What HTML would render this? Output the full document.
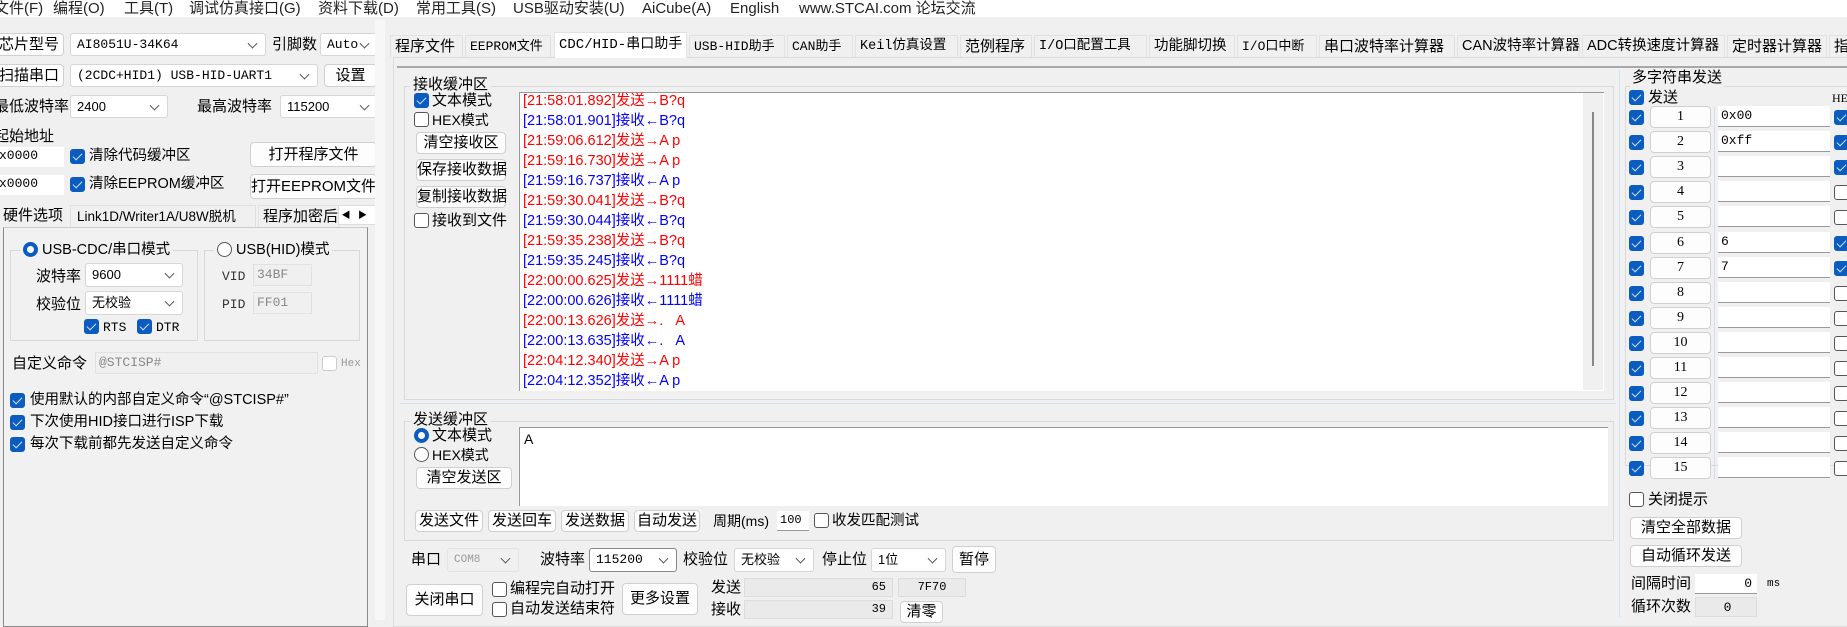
<!DOCTYPE html>
<html><head><meta charset="utf-8"><style>
*{box-sizing:border-box;margin:0;padding:0}
body{width:1847px;height:617px;overflow:hidden;background:#f0f0f0;position:relative;font-family:"Liberation Sans","Noto Sans CJK SC",sans-serif;font-size:14px;color:#000}
.a{position:absolute;white-space:nowrap}
.t{position:absolute;white-space:nowrap;line-height:1}
.btn{position:absolute;background:#fdfdfd;border:1px solid #d0d0d0;border-radius:4px;text-align:center;white-space:nowrap;font-size:14px}
.cmb{position:absolute;background:#fff;border:1px solid #d6d6d6;border-radius:3px;padding-left:6px;white-space:nowrap;font-size:13px;font-family:"Liberation Mono","Noto Sans CJK SC",monospace}
.cmb:after{content:"";position:absolute;right:9px;top:50%;width:6px;height:6px;border-right:1px solid #555;border-bottom:1px solid #555;transform:translateY(-70%) rotate(45deg)}
.inp{position:absolute;background:#fff;border:1px solid #d6d6d6;white-space:nowrap;font-size:13px;font-family:"Liberation Mono",monospace;padding-left:3px}
.cb{position:absolute;width:15px;height:15px;border:1px solid #555;border-radius:3px;background:#fff}
.cb.on{background:#0b5cc0;border-color:#0b5cc0}
.cb.on:after{content:"";position:absolute;left:4px;top:1px;width:4px;height:8px;border-right:1.5px solid #cfe0f5;border-bottom:1.5px solid #cfe0f5;transform:rotate(45deg)}
.rd{position:absolute;width:15px;height:15px;border:1px solid #555;border-radius:50%;background:#fff}
.rd.on{border:4px solid #0b5cc0}
.grp{position:absolute;border:1px solid #d8d8d8}
.tab{position:absolute;top:35px;height:22px;border:1px solid #e2e2e2;border-bottom:none;background:#f0f0f0;font-size:14px;line-height:21px;padding:0 4px;white-space:nowrap;overflow:hidden}
.log{position:absolute;left:523px;font-size:14.5px;line-height:20px;font-family:"Liberation Sans","Noto Sans CJK SC",sans-serif}
.r{color:#f00}.b{color:#00f}
</style></head><body>
<div class="a" style="left:0;top:0;width:1847px;height:17px;background:#fff"></div>
<div class="t" style="left:0;top:1px;font-size:15px;color:#222">
<span style="position:absolute;left:-6px">文件(F)</span><span style="position:absolute;left:53px">编程(O)</span><span style="position:absolute;left:124px">工具(T)</span><span style="position:absolute;left:189px">调试仿真接口(G)</span><span style="position:absolute;left:318px">资料下载(D)</span><span style="position:absolute;left:416px">常用工具(S)</span><span style="position:absolute;left:513px">USB驱动安装(U)</span><span style="position:absolute;left:642px">AiCube(A)</span><span style="position:absolute;left:730px">English</span><span style="position:absolute;left:799px">www.STCAI.com 论坛交流</span></div>

<div class="btn" style="left:-6px;top:33px;width:70px;height:23px;line-height:21px;font-size:15px">芯片型号</div>
<div class="cmb" style="left:70px;top:33px;width:196px;height:23px;line-height:21px">AI8051U-34K64</div>
<div class="t" style="left:272px;top:37px;font-size:15px">引脚数</div>
<div class="cmb" style="left:320px;top:33px;width:58px;height:23px;line-height:21px">Auto</div>
<div class="btn" style="left:-6px;top:64px;width:70px;height:23px;line-height:21px;font-size:15px">扫描串口</div>
<div class="cmb" style="left:70px;top:64px;width:248px;height:23px;line-height:21px">(2CDC+HID1) USB-HID-UART1</div>
<div class="btn" style="left:324px;top:64px;width:53px;height:23px;line-height:21px;font-size:15px">设置</div>
<div class="t" style="left:-6px;top:99px;font-size:15px">最低波特率</div>
<div class="cmb" style="left:70px;top:95px;width:98px;height:23px;line-height:21px;font-family:'Liberation Sans'">2400</div>
<div class="t" style="left:197px;top:99px;font-size:15px">最高波特率</div>
<div class="cmb" style="left:280px;top:95px;width:98px;height:23px;line-height:21px;font-family:'Liberation Sans'">115200</div>
<div class="t" style="left:-6px;top:129px;font-size:15px">起始地址</div>
<div class="inp" style="left:-4px;top:147px;width:68px;height:20px;line-height:18px;border:none">x0000</div>
<div class="cb on" style="left:70px;top:149px"></div><div class="t" style="left:89px;top:149px;font-size:14.5px">清除代码缓冲区</div>
<div class="btn" style="left:250px;top:142px;width:127px;height:25px;line-height:23px;font-size:15px">打开程序文件</div>
<div class="inp" style="left:-4px;top:175px;width:68px;height:20px;line-height:18px;border:none">x0000</div>
<div class="cb on" style="left:70px;top:177px"></div><div class="t" style="left:89px;top:177px;font-size:14.5px">清除EEPROM缓冲区</div>
<div class="btn" style="left:250px;top:174px;width:127px;height:25px;line-height:23px;font-size:15px">打开EEPROM文件</div>
<div class="a" style="left:0;top:205px;width:68px;height:22px;line-height:22px;font-size:15px;padding-left:3px">硬件选项</div>
<div class="a" style="left:70px;top:205px;width:186px;height:22px;line-height:22px;font-size:13.5px;padding-left:6px;border:1px solid #e2e2e2;border-bottom:none">Link1D/Writer1A/U8W脱机</div>
<div class="a" style="left:258px;top:205px;width:82px;height:22px;line-height:22px;font-size:15px;padding-left:4px;overflow:hidden;border:1px solid #e2e2e2;border-bottom:none">程序加密后</div>
<div class="a" style="left:338px;top:205px;width:39px;height:20px;background:#fff;border:1px solid #ddd;font-size:9px;line-height:18px">&nbsp;◀&nbsp;&nbsp;&nbsp;▶</div>
<div class="a" style="left:3px;top:227px;width:365px;height:400px;border:1px solid #8a8a8a;border-top-color:#ccc;background:#f1f1f1"></div>
<div class="a" style="left:375px;top:20px;width:10px;height:600px;background:#f7f7f7"></div>
<div class="grp" style="left:10px;top:250px;width:188px;height:91px"></div>
<div class="a" style="left:20px;top:241px;background:#f1f1f1;padding:0 3px;font-size:14.5px;line-height:18px"><span class="rd on" style="position:relative;display:inline-block;vertical-align:-3px;left:0;top:0"></span> USB-CDC/串口模式</div>
<div class="t" style="left:36px;top:269px;font-size:15px">波特率</div>
<div class="cmb" style="left:85px;top:263px;width:98px;height:24px;line-height:22px;font-family:'Liberation Sans'">9600</div>
<div class="t" style="left:36px;top:297px;font-size:15px">校验位</div>
<div class="cmb" style="left:85px;top:291px;width:98px;height:24px;line-height:22px;font-family:'Liberation Sans','Noto Sans CJK SC'">无校验</div>
<div class="cb on" style="left:84px;top:319px"></div><div class="t" style="left:103px;top:321px;font-size:13px;font-family:'Liberation Mono'">RTS</div>
<div class="cb on" style="left:137px;top:319px"></div><div class="t" style="left:156px;top:321px;font-size:13px;font-family:'Liberation Mono'">DTR</div>
<div class="grp" style="left:204px;top:250px;width:156px;height:91px"></div>
<div class="a" style="left:214px;top:241px;background:#f1f1f1;padding:0 3px;font-size:14.5px;line-height:18px"><span class="rd" style="position:relative;display:inline-block;vertical-align:-3px;left:0;top:0"></span> USB(HID)模式</div>
<div class="t" style="left:222px;top:270px;font-size:13px;font-family:'Liberation Mono';color:#333">VID</div>
<div class="inp" style="left:253px;top:264px;width:59px;height:22px;line-height:20px;background:#f0f0f0;border-color:#e2e2e2;color:#888">34BF</div>
<div class="t" style="left:222px;top:298px;font-size:13px;font-family:'Liberation Mono';color:#333">PID</div>
<div class="inp" style="left:253px;top:292px;width:59px;height:22px;line-height:20px;background:#f0f0f0;border-color:#e2e2e2;color:#888">FF01</div>
<div class="t" style="left:12px;top:356px;font-size:15px">自定义命令</div>
<div class="inp" style="left:95px;top:352px;width:223px;height:22px;line-height:20px;background:#f0f0f0;border-color:#e2e2e2;color:#888">@STCISP#</div>
<div class="cb" style="left:322px;top:356px;border-color:#ccc"></div><div class="t" style="left:341px;top:359px;font-size:11px;color:#999;font-family:'Liberation Mono'">Hex</div>
<div class="cb on" style="left:10px;top:393px"></div><div class="t" style="left:30px;top:393px;font-size:14.5px">使用默认的内部自定义命令“@STCISP#”</div>
<div class="cb on" style="left:10px;top:415px"></div><div class="t" style="left:30px;top:415px;font-size:14.5px">下次使用HID接口进行ISP下载</div>
<div class="cb on" style="left:10px;top:437px"></div><div class="t" style="left:30px;top:437px;font-size:14.5px">每次下载前都先发送自定义命令</div>

<div class="tab" style="left:390px;width:73px;font-size:15px">程序文件</div>
<div class="tab" style="left:465px;width:86px;font-family:'Liberation Mono','Noto Sans CJK SC';font-size:13px">EEPROM文件</div>
<div class="tab" style="left:554px;width:133px;top:32px;height:26px;background:#fff;z-index:2;line-height:24px;font-size:14px;font-family:'Liberation Mono','Noto Sans CJK SC'">CDC/HID-串口助手</div>
<div class="tab" style="left:689px;width:96px;font-family:'Liberation Mono','Noto Sans CJK SC';font-size:13px">USB-HID助手</div>
<div class="tab" style="left:787px;width:66px;font-family:'Liberation Mono','Noto Sans CJK SC';font-size:13px">CAN助手</div>
<div class="tab" style="left:855px;width:103px;font-family:'Liberation Mono','Noto Sans CJK SC';font-size:13.5px">Keil仿真设置</div>
<div class="tab" style="left:960px;width:72px;font-size:15px">范例程序</div>
<div class="tab" style="left:1034px;width:113px;font-family:'Liberation Mono','Noto Sans CJK SC';font-size:13.5px">I/O口配置工具</div>
<div class="tab" style="left:1149px;width:86px;font-size:14.5px">功能脚切换</div>
<div class="tab" style="left:1237px;width:80px;font-family:'Liberation Mono','Noto Sans CJK SC';font-size:13px">I/O口中断</div>
<div class="tab" style="left:1319px;width:136px;font-size:15px">串口波特率计算器</div>
<div class="tab" style="left:1457px;width:123px;font-size:14.5px">CAN波特率计算器</div>
<div class="tab" style="left:1582px;width:143px;font-size:14.5px">ADC转换速度计算器</div>
<div class="tab" style="left:1727px;width:100px;font-size:15px">定时器计算器</div>
<div class="tab" style="left:1829px;width:30px;font-size:15px">指</div>
<div class="a" style="left:393px;top:57px;width:1460px;height:570px;border:1px solid #dcdcdc;background:#f0f0f0"></div>
<div class="a" style="left:397px;top:66px;width:1450px;height:2px;background:#a8a8a8"></div>

<div class="grp" style="left:404px;top:86px;width:1210px;height:314px;border-color:#dadada"></div>
<div class="a" style="left:410px;top:77px;background:#f0f0f0;padding:0 3px;font-size:15px;line-height:16px">接收缓冲区</div>
<div class="cb on" style="left:414px;top:93px"></div><div class="t" style="left:432px;top:93px;font-size:15px">文本模式</div>
<div class="cb" style="left:414px;top:112px"></div><div class="t" style="left:432px;top:113px;font-size:14px">HEX模式</div>
<div class="btn" style="left:416px;top:132px;width:90px;height:22px;line-height:20px;font-size:15px">清空接收区</div>
<div class="btn" style="left:416px;top:159px;width:90px;height:22px;line-height:20px;font-size:15px">保存接收数据</div>
<div class="btn" style="left:416px;top:186px;width:90px;height:22px;line-height:20px;font-size:15px">复制接收数据</div>
<div class="cb" style="left:414px;top:213px"></div><div class="t" style="left:432px;top:213px;font-size:15px">接收到文件</div>
<div class="a" style="left:519px;top:92px;width:1085px;height:299px;background:#fff;border-left:1px solid #999;border-top:1px solid #999"></div>
<div class="a" style="left:1583px;top:93px;width:20px;height:297px;background:#f0f0f0"></div>
<div class="a" style="left:1592px;top:112px;width:2px;height:254px;background:#888"></div>
<div class="log" style="top:91px">
<div class="r">[21:58:01.892]发送→B?q</div>
<div class="b">[21:58:01.901]接收←B?q</div>
<div class="r">[21:59:06.612]发送→A p</div>
<div class="r">[21:59:16.730]发送→A p</div>
<div class="b">[21:59:16.737]接收←A p</div>
<div class="r">[21:59:30.041]发送→B?q</div>
<div class="b">[21:59:30.044]接收←B?q</div>
<div class="r">[21:59:35.238]发送→B?q</div>
<div class="b">[21:59:35.245]接收←B?q</div>
<div class="r">[22:00:00.625]发送→1111蜡</div>
<div class="b">[22:00:00.626]接收←1111蜡</div>
<div class="r">[22:00:13.626]发送→.&nbsp;&nbsp;&nbsp;A</div>
<div class="b">[22:00:13.635]接收←.&nbsp;&nbsp;&nbsp;A</div>
<div class="r">[22:04:12.340]发送→A p</div>
<div class="b">[22:04:12.352]接收←A p</div>
</div>
<div class="a" style="left:400px;top:403px;width:1216px;height:1px;background:#cfe3f3"></div>

<div class="grp" style="left:404px;top:421px;width:1210px;height:120px;border-color:#dadada"></div>
<div class="a" style="left:410px;top:412px;background:#f0f0f0;padding:0 3px;font-size:15px;line-height:16px">发送缓冲区</div>
<div class="rd on" style="left:414px;top:428px"></div><div class="t" style="left:432px;top:428px;font-size:15px">文本模式</div>
<div class="rd" style="left:414px;top:447px"></div><div class="t" style="left:432px;top:448px;font-size:14px">HEX模式</div>
<div class="btn" style="left:416px;top:467px;width:96px;height:22px;line-height:20px;font-size:15px">清空发送区</div>
<div class="a" style="left:519px;top:427px;width:1089px;height:79px;background:#fff;border-left:1px solid #999;border-top:1px solid #999;padding:3px 4px;font-size:14px">A</div>
<div class="btn" style="left:415px;top:510px;width:68px;height:22px;line-height:20px;font-size:15px">发送文件</div>
<div class="btn" style="left:488px;top:510px;width:68px;height:22px;line-height:20px;font-size:15px">发送回车</div>
<div class="btn" style="left:561px;top:510px;width:68px;height:22px;line-height:20px;font-size:15px">发送数据</div>
<div class="btn" style="left:634px;top:510px;width:66px;height:22px;line-height:20px;font-size:15px">自动发送</div>
<div class="t" style="left:713px;top:514px;font-size:14px">周期(ms)</div>
<div class="inp" style="left:777px;top:511px;width:32px;height:20px;line-height:19px;border:none;border-bottom:1px solid #999;font-size:12px">100</div>
<div class="cb" style="left:814px;top:513px"></div><div class="t" style="left:832px;top:514px;font-size:14.5px">收发匹配测试</div>

<div class="t" style="left:411px;top:552px;font-size:15px">串口</div>
<div class="cmb" style="left:447px;top:548px;width:72px;height:24px;line-height:22px;background:#f0f0f0;border-color:#e4e4e4;color:#999;font-size:11px">COM8</div>
<div class="t" style="left:540px;top:552px;font-size:15px">波特率</div>
<div class="cmb" style="left:589px;top:548px;width:88px;height:24px;line-height:22px;border-color:#888;font-size:13px">115200</div>
<div class="t" style="left:683px;top:552px;font-size:15px">校验位</div>
<div class="cmb" style="left:734px;top:548px;width:80px;height:24px;line-height:22px;font-family:'Liberation Sans','Noto Sans CJK SC'">无校验</div>
<div class="t" style="left:822px;top:552px;font-size:15px">停止位</div>
<div class="cmb" style="left:871px;top:548px;width:75px;height:24px;line-height:22px;font-family:'Liberation Sans','Noto Sans CJK SC'">1位</div>
<div class="btn" style="left:952px;top:546px;width:44px;height:27px;line-height:25px;font-size:15px">暂停</div>
<div class="btn" style="left:406px;top:584px;width:77px;height:32px;line-height:30px;font-size:15px">关闭串口</div>
<div class="cb" style="left:492px;top:582px"></div><div class="t" style="left:510px;top:581px;font-size:15px">编程完自动打开</div>
<div class="cb" style="left:492px;top:602px"></div><div class="t" style="left:510px;top:601px;font-size:15px">自动发送结束符</div>
<div class="btn" style="left:622px;top:583px;width:76px;height:32px;line-height:30px;font-size:15px">更多设置</div>
<div class="t" style="left:711px;top:580px;font-size:15px">发送</div>
<div class="a" style="left:744px;top:578px;width:149px;height:19px;background:#eaeaea;border:1px solid #ddd;text-align:right;padding-right:6px;font-size:12px;line-height:17px;font-family:'Liberation Mono'">65</div>
<div class="a" style="left:898px;top:578px;width:68px;height:19px;background:#eaeaea;border:1px solid #ddd;text-align:center;font-size:12px;line-height:17px;font-family:'Liberation Mono'">7F70</div>
<div class="t" style="left:711px;top:602px;font-size:15px">接收</div>
<div class="a" style="left:744px;top:600px;width:149px;height:19px;background:#eaeaea;border:1px solid #ddd;text-align:right;padding-right:6px;font-size:12px;line-height:17px;font-family:'Liberation Mono'">39</div>
<div class="btn" style="left:900px;top:601px;width:43px;height:22px;line-height:20px;font-size:15px">清零</div>

<div class="a" style="left:1619px;top:70px;width:1px;height:547px;background:#cfe3f3"></div>
<div class="grp" style="left:1625px;top:86px;width:230px;height:380px;border-color:#dadada"></div>
<div class="a" style="left:1630px;top:69px;background:#f0f0f0;padding:0 2px;font-size:15px;line-height:18px">多字符串发送</div>
<div class="cb on" style="left:1629px;top:90px"></div><div class="t" style="left:1648px;top:90px;font-size:15px">发送</div>
<div class="t" style="left:1832px;top:92px;font-size:12px;font-family:'Liberation Serif'">HE</div>
<div class="a" style="left:1714px;top:107px;width:1px;height:372px;background:#cfe3f3"></div>
<div id="rows"></div>
<div class="cb" style="left:1629px;top:492px"></div><div class="t" style="left:1648px;top:492px;font-size:15px">关闭提示</div>
<div class="btn" style="left:1630px;top:517px;width:112px;height:22px;line-height:20px;font-size:15px">清空全部数据</div>
<div class="btn" style="left:1630px;top:545px;width:112px;height:22px;line-height:20px;font-size:15px">自动循环发送</div>
<div class="t" style="left:1631px;top:576px;font-size:15px">间隔时间</div>
<div class="inp" style="left:1695px;top:574px;width:62px;height:20px;line-height:19px;text-align:right;padding-right:5px;border:none;border-bottom:1px solid #999">0</div>
<div class="t" style="left:1767px;top:579px;font-size:11px;font-family:'Liberation Mono'">ms</div>
<div class="t" style="left:1631px;top:599px;font-size:15px">循环次数</div>
<div class="inp" style="left:1695px;top:597px;width:62px;height:20px;line-height:19px;text-align:center;background:#eaeaea;border-color:#ddd">0</div>
<script>
var h='',hex=[1,1,1,0,0,1,1,0,0,0,0,0,0,0,0],val=['0x00','0xff','','','','6','7','','','','','','','',''];
for(var i=0;i<15;i++){var y=110+i*25.1;
h+='<div class="cb on" style="left:1629px;top:'+(y)+'px"></div>';
h+='<div class="btn" style="left:1650px;top:'+(y-4)+'px;width:61px;height:22px;line-height:20px;font-size:14px;font-family:\'Liberation Serif\'">'+(i+1)+'</div>';
h+='<div class="inp" style="left:1718px;top:'+(y-4)+'px;width:112px;height:21px;line-height:19px;border:none;border-bottom:1px solid #999">'+val[i]+'</div>';
h+='<div class="cb'+(hex[i]?' on':'')+'" style="left:1834px;top:'+y+'px"></div>';}
document.getElementById('rows').innerHTML=h;
</script>
</body></html>
